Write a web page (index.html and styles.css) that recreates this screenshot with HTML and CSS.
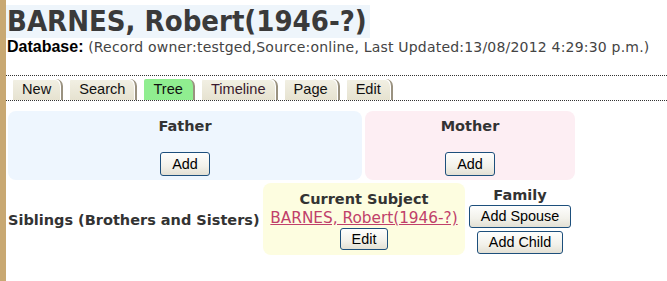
FILE: index.html
```html
<!DOCTYPE html>
<html lang="en">
<head>
    <meta charset="UTF-8">
    <title>BARNES, Robert(1946-?)</title>
    <link rel="stylesheet" href="styles.css">
</head>
<body>
    <div class="page">
        <h1 class="title">BARNES, Robert(1946-?)</h1>
        <div class="meta"><b>Database:</b> <span>(Record owner:testged,Source:online, Last Updated:13/08/2012 4:29:30 p.m.)</span></div>

        <ul class="tabs">
            <li>New</li>
            <li>Search</li>
            <li class="current">Tree</li>
            <li class="visited">Timeline</li>
            <li>Page</li>
            <li>Edit</li>
        </ul>

        <div class="parents">
            <div class="box father">
                <h4>Father</h4>
                <button>Add</button>
            </div>
            <div class="box mother">
                <h4>Mother</h4>
                <button>Add</button>
            </div>
        </div>

        <div class="subject-row">
            <div class="siblings">Siblings (Brothers and Sisters)</div>
            <div class="box subject">
                <h4>Current Subject</h4>
                <a href="#">BARNES, Robert(1946-?)</a>
                <button>Edit</button>
            </div>
            <div class="family">
                <h4>Family</h4>
                <button>Add Spouse</button>
                <button>Add Child</button>
            </div>
        </div>
    </div>
</body>
</html>
```

FILE: styles.css
```css
body {
    margin: 0;
    background: #fff;
    font-family: "DejaVu Sans", Verdana, sans-serif;
    color: #333;
}
.page {
    border-left: 6px solid #c8a872;
    min-height: 281px;
    box-sizing: border-box;
    padding-top: 5px;
}
.title {
    display: inline-block;
    margin: 0;
    padding: 0 3px 0 1px;
    background: #eef5fb;
    font-family: "DejaVu Sans Condensed", "DejaVu Sans", sans-serif;
    font-stretch: condensed;
    font-size: 29px;
    line-height: 33px;
    color: #3a3a3a;
}
.meta {
    font-size: 14px;
    line-height: 18px;
    letter-spacing: 0.2px;
    color: #444;
    padding-left: 1px;
}
.meta b {
    font-family: "Liberation Sans", Arial, sans-serif;
    font-size: 16px;
    letter-spacing: 0;
    color: #000;
}
.tabs {
    list-style: none;
    margin: 19px 0 0 0;
    padding: 3px 0 0 7px;
    display: flex;
    gap: 7px;
    border-top: 1px dotted #333;
    border-bottom: 1px dotted #333;
}
.tabs li {
    font-family: "Liberation Sans", Arial, sans-serif;
    font-size: 14.6px;
    line-height: 21px;
    color: #111;
    padding: 0 10px 0 9px;
    background: linear-gradient(#f2f0e4, #e6e2d0);
    border-right: 2px solid #9a9280;
    border-top-left-radius: 2px;
    border-top-right-radius: 7px;
    box-shadow: inset -1px 1px 0 #fff;
}
.tabs li.current {
    background: #90ee90;
    box-shadow: none;
}
.tabs li.visited {
    color: #3a1a2e;
}
.parents {
    display: flex;
    gap: 3px;
    margin: 10px 0 0 2px;
}
.box {
    border-radius: 8px;
    text-align: center;
}
.box h4, .family h4 {
    margin: 0;
    font-size: 14.5px;
    line-height: 17px;
}
.father, .mother {
    height: 69px;
    padding-top: 7px;
    box-sizing: border-box;
}
.father {
    width: 354px;
    background: #eef6fe;
}
.mother {
    width: 210px;
    background: #fdeef3;
}
.father button, .mother button {
    margin-top: 17px;
    height: 24px;
}
button {
    font-family: "Liberation Sans", Arial, sans-serif;
    font-size: 14.4px;
    line-height: 15px;
    height: 23px;
    padding: 0 11px;
    color: #000;
    border: 1px solid #1d4f7c;
    border-radius: 3px;
    background: linear-gradient(#fefefd, #f2f1ea 60%, #e3e0d4);
}
.subject-row {
    display: flex;
    align-items: flex-start;
    margin: 3px 0 0 2px;
}
.siblings {
    width: 255px;
    font-weight: bold;
    font-size: 14.5px;
    margin-top: 29px;
}
.subject {
    width: 202px;
    height: 72px;
    background: #fdfde0;
    padding-top: 8px;
    box-sizing: border-box;
}
.subject a {
    display: block;
    font-size: 15.3px;
    color: #c0406a;
    line-height: 20px;
}
.subject button {
    height: 22px;
}
.family {
    width: 110px;
    display: flex;
    flex-direction: column;
    align-items: center;
    gap: 3px;
    padding-top: 4px;
}
.family h4 {
    margin-bottom: -2px;
}
```
